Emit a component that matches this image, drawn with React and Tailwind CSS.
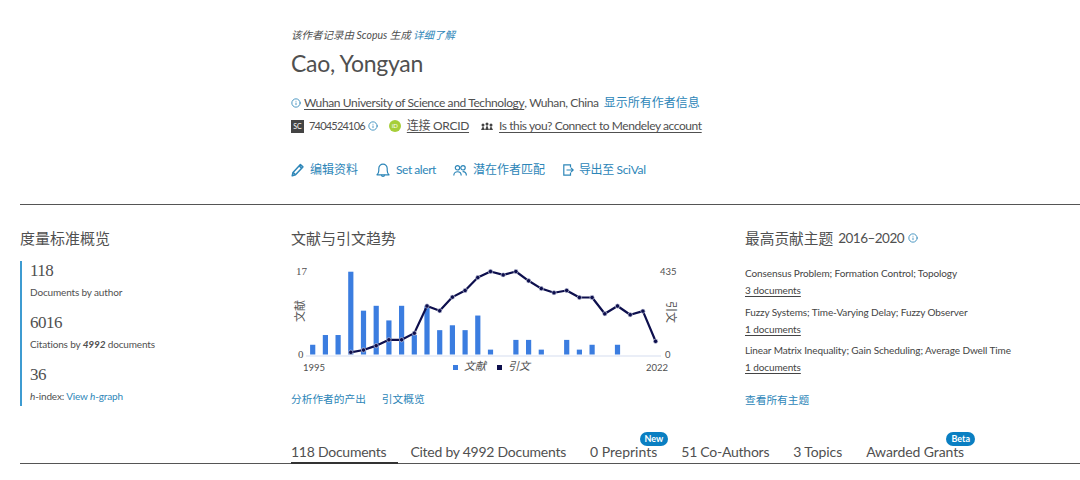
import { Info } from "lucide-react";

const sans = "font-['Lato','Noto_Sans_CJK_SC',sans-serif]";

const docs = [2, 4, 4, 17, 9, 10, 7, 10, 4, 10, 5, 6, 5, 8, 1, 0, 3, 3, 1, 0, 3, 1, 2, 0, 2, 0, 0];
const cites = [9, 21, 44, 75, 75, 110, 253, 228, 300, 335, 403, 435, 417, 435, 386, 345, 323, 335, 298, 298, 212, 253, 207, 226, 67];

const actions = [
  {
    label: "编辑资料",
    gap: "mr-[18px] gap-[6px]",
    icon: (
      <svg width="13" height="14" viewBox="0 0 13 14" fill="none" stroke="currentColor" strokeWidth="1.5" strokeLinejoin="round">
        <path d="M1.2 12.8 2 9.4 9.4 1.6l2.5 2.3-7.4 7.8z" />
        <path d="M2 9.4l2.5 2.3M8.2 2.9l2.5 2.3" />
      </svg>
    ),
  },
  {
    label: "Set alert",
    gap: "mr-[17px] gap-[6px] tracking-[-0.45px]",
    icon: (
      <svg width="14" height="15" viewBox="0 0 14 15" fill="none" stroke="currentColor" strokeWidth="1.2" strokeLinejoin="round">
        <path d="M1 11.8c1.3-1 1.8-2.2 1.8-4.2V5.4a4.2 4.2 0 0 1 8.4 0v2.2c0 2 .5 3.2 1.8 4.2z" />
        <path d="M5.5 11.8c0 2.2 3 2.2 3 0" />
      </svg>
    ),
  },
  {
    label: "潜在作者匹配",
    gap: "mr-[18px] gap-[6px]",
    icon: (
      <svg width="14" height="11" viewBox="0 0 14 11" fill="none" stroke="currentColor" strokeWidth="1.2">
        <circle cx="4.5" cy="2.8" r="2.2" />
        <circle cx="10" cy="2.8" r="2.2" />
        <path d="M.8 10.5c0-5 7.4-5 7.4 0M9.6 6.6c2.2-.2 3.8 1.2 3.8 3.9" />
      </svg>
    ),
  },
  {
    label: "导出至 SciVal",
    gap: "gap-[5px] tracking-[-0.35px]",
    icon: (
      <svg width="11" height="12" viewBox="0 0 11 12" fill="none" stroke="currentColor" strokeWidth="1.2">
        <path d="M7.5 3.5V.8H.8v10.4h6.7V8.5" />
        <path d="M3.5 6h6.5M8 3.9 10.2 6 8 8.1" />
      </svg>
    ),
  },
];

const topics = [
  ["Consensus Problem; Formation Control; Topology", "3 documents"],
  ["Fuzzy Systems; Time-Varying Delay; Fuzzy Observer", "1 documents"],
  ["Linear Matrix Inequality; Gain Scheduling; Average Dwell Time", "1 documents"],
];

function TrendChart() {
  const barX = (i) => 21.7 + i * 12.7;
  const baseY = 94;
  const line = cites.map((c, i) => [barX(i + 3), baseY - (c / 435) * 82.5]);
  return (
    <svg width="390" height="122" viewBox="0 0 390 122" className="block" fontFamily="Lato, 'Noto Sans CJK SC', sans-serif" fontSize="9.5" fill="#505050">
      <line x1="15" y1="96" x2="370" y2="96" stroke="#e3e9f5" strokeWidth="1.5" />
      {docs.map((d, i) =>
        d > 0 ? <rect key={i} x={barX(i) - 2.6} y={94.5 - d * 4.87} width="5.2" height={d * 4.87} fill="#3b7de0" /> : null
      )}
      <polyline points={line.map((p) => p.join(",")).join(" ")} fill="none" stroke="#0d0f4d" strokeWidth="2.2" strokeLinejoin="round" />
      {line.map((p, i) => (
        <circle key={i} cx={p[0]} cy={p[1]} r="2.2" fill="#0d0f4d" stroke="#dfe3f3" strokeWidth="0.6" />
      ))}
      <text x="5" y="15" fontFamily="'Liberation Serif', serif" fontSize="11">17</text>
      <text x="7" y="98" fontFamily="'Liberation Serif', serif" fontSize="11">0</text>
      <text x="369" y="15">435</text>
      <text x="374" y="98">0</text>
      <text x="12" y="111">1995</text>
      <text x="355" y="111">2022</text>
      <text transform="translate(13 62) rotate(-90)" fontSize="11">文献</text>
      <text transform="translate(376 41) rotate(90)" fontSize="11">引文</text>
      <rect x="162" y="105" width="5" height="5" fill="#3b7de0" />
      <text x="173" y="110" fontStyle="italic" fontSize="11">文献</text>
      <rect x="206" y="105" width="5" height="5" fill="#0d0f4d" />
      <text x="217" y="110" fontStyle="italic" fontSize="11">引文</text>
    </svg>
  );
}

function Stat({ value, label }) {
  return (
    <div>
      <div className="font-['Liberation_Serif',serif] text-[17px] leading-[20px] tracking-[-0.5px] text-[#505050]">{value}</div>
      <div className="mt-[4px] text-[10px] leading-[14px] tracking-[-0.15px] text-[#505050]">{label}</div>
    </div>
  );
}

function Tab({ children, active, badge, className = "tracking-[-0.25px]" }) {
  return (
    <div className={`relative pb-[1px] pr-[12px] text-[14px] leading-[20px] text-[#505050] ${className}`}>
      {children}
      {active && <span className="absolute bottom-[-1px] left-0 right-0 h-[2px] bg-[#333]" />}
      {badge && (
        <span className="absolute right-[1px] top-[-10px] rounded-full bg-[#0a7fc2] px-[5px] text-[9px] leading-[14px] font-bold tracking-normal text-white">
          {badge}
        </span>
      )}
    </div>
  );
}

export default function App() {
  return (
    <div className={`h-[480px] w-[1080px] overflow-hidden bg-white ${sans}`}>
      <div className="h-[204px] pl-[291px] pt-[28px] text-[#505050]">
        <p className="text-[10.5px] leading-[15px] italic">
          该作者记录由 Scopus 生成 <span className="text-[#2d86b8]">详细了解</span>
        </p>
        <h1 className="mt-[4px] text-[23px] leading-[32px] tracking-[-0.3px]">Cao, Yongyan</h1>
        <div className="mt-[16px] flex items-center text-[12px] leading-[16px]">
          <Info size={10} className="mr-[3px] text-[#2d86b8]" />
          <span className="tracking-[-0.38px] underline underline-offset-2">Wuhan University of Science and Technology</span>
          <span className="tracking-[-0.38px]">, Wuhan, China</span>
          <span className="ml-[5px] text-[#2d86b8]">显示所有作者信息</span>
        </div>
        <div className="mt-[7px] flex items-center text-[12px] leading-[16px]">
          <span className="flex h-[13px] w-[13px] items-center justify-center bg-[#444] text-[7px] text-white">SC</span>
          <span className="ml-[5px] text-[11px] tracking-[-0.8px]">7404524106</span>
          <Info size={10} className="ml-[3px] text-[#2d86b8]" />
          <span className="ml-[11px] flex h-[12px] w-[12px] items-center justify-center rounded-full bg-[#a6ce39] text-[6px] text-white">iD</span>
          <span className="ml-[6px] tracking-[-0.3px] underline underline-offset-2">连接 ORCID</span>
          <svg width="12" height="8" viewBox="0 0 12 8" className="ml-[12px]" fill="#444">
            <circle cx="2" cy="3" r="1.5" />
            <circle cx="6" cy="2" r="1.5" />
            <circle cx="10" cy="3" r="1.5" />
            <path d="M0 8l2-4 2 4zM4 8l2-5 2 5zM8 8l2-4 2 4z" />
          </svg>
          <span className="ml-[6px] tracking-[-0.42px] underline underline-offset-2">Is this you? Connect to Mendeley account</span>
        </div>
        <div className="mt-[28px] flex items-center text-[12px] leading-[16px] text-[#2d86b8]">
          {actions.map((a) => (
            <div key={a.label} className={`flex items-center ${a.gap}`}>
              {a.icon}
              <span>{a.label}</span>
            </div>
          ))}
        </div>
      </div>

      <div className="ml-[20px] grid h-[219px] grid-cols-[271px_454px_1fr] border-t border-[#555] pt-[23px]">
        <div>
          <h2 className="text-[15px] leading-[20px] text-[#505050]">度量标准概览</h2>
          <div className="mt-[13px] flex h-[145px] flex-col gap-[14px] border-l-2 border-[#3d9bd1] pl-[8px]">
            <Stat value="118" label="Documents by author" />
            <Stat
              value="6016"
              label={
                <>
                  Citations by <b className="italic">4992</b> documents
                </>
              }
            />
            <Stat
              value="36"
              label={
                <>
                  <i>h</i>-index: <span className="text-[#2d86b8]">View <i>h</i>-graph</span>
                </>
              }
            />
          </div>
        </div>

        <div>
          <h2 className="text-[15px] leading-[20px] text-[#505050]">文献与引文趋势</h2>
          <div className="mt-[12px]">
            <TrendChart />
          </div>
          <div className="mt-[9px] flex gap-[16px] text-[10.7px] leading-[15px] text-[#2d86b8]">
            <span>分析作者的产出</span>
            <span>引文概览</span>
          </div>
        </div>

        <div>
          <h2 className="flex items-center text-[14.7px] leading-[20px] text-[#505050]">
            最高贡献主题
            <span className="ml-[5px] text-[13.5px] tracking-[-0.5px]">2016–2020</span>
            <Info size={10} className="ml-[4px] text-[#2d86b8]" />
          </h2>
          <div className="mt-[17px] flex flex-col gap-[4px] text-[10px] tracking-[-0.1px] text-[#444]">
            {topics.map(([name, count]) => (
              <div key={name}>
                <div className="leading-[17px]">{name}</div>
                <div className="leading-[17.5px] underline underline-offset-2">{count}</div>
              </div>
            ))}
          </div>
          <div className="mt-[15px] text-[10.7px] leading-[16px] text-[#2d86b8]">查看所有主题</div>
        </div>
      </div>

      <div className="ml-[20px] flex h-[41px] items-end gap-[12px] border-b border-[#555] pl-[271px]">
        <Tab active>118 Documents</Tab>
        <Tab>Cited by 4992 Documents</Tab>
        <Tab badge="New" className="tracking-normal">0 Preprints</Tab>
        <Tab className="tracking-[-0.25px]">51 Co-Authors</Tab>
        <Tab className="tracking-[-0.1px]">3 Topics</Tab>
        <Tab badge="Beta" className="tracking-[-0.1px]">Awarded Grants</Tab>
      </div>
    </div>
  );
}
